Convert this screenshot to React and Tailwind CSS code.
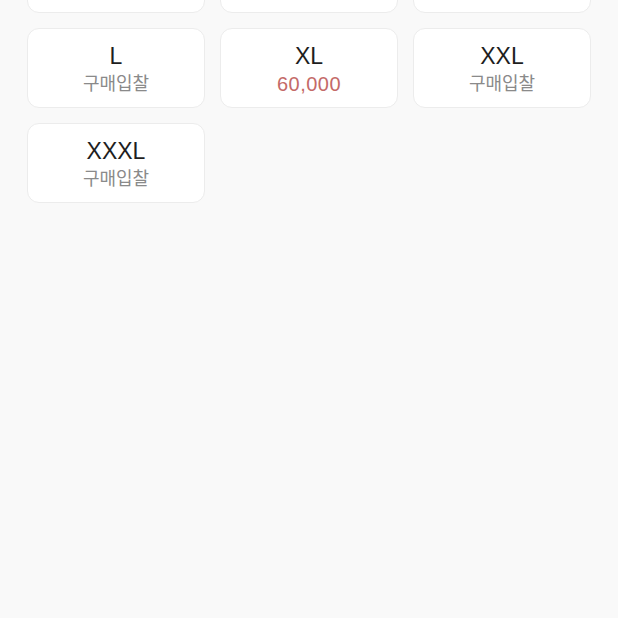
import React from 'react'

const SIZES = [
  { size: 'XS', price: null },
  { size: 'S', price: null },
  { size: 'M', price: null },
  { size: 'L', price: null },
  { size: 'XL', price: '60,000' },
  { size: 'XXL', price: null },
  { size: 'XXXL', price: null },
]

export default function App(){
  return (
    <div className="w-[618px] h-[618px] overflow-hidden bg-[#f9f9f9]" style={{fontFamily:'"Liberation Sans", "Noto Sans CJK KR", sans-serif'}}>
      <div className="grid grid-cols-3 gap-x-[15px] gap-y-[15px] px-[27px] -mt-[67px]">
        {SIZES.map(s=>(
          <button key={s.size} className="h-[80px] rounded-[12px] bg-white border border-[#ececec] flex flex-col items-center justify-center pt-[3px]">
            <div className="text-[23px] leading-[28px] text-[#1e1e1e]">{s.size}</div>
            <div className={s.price ? 'text-[20px] leading-[28px] tracking-[0.5px] text-[#c46a68]' : 'text-[18px] leading-[28px] text-[#8a8a8a]'}>
              {s.price || '구매입찰'}
            </div>
          </button>
        ))}
      </div>
    </div>
  )
}
